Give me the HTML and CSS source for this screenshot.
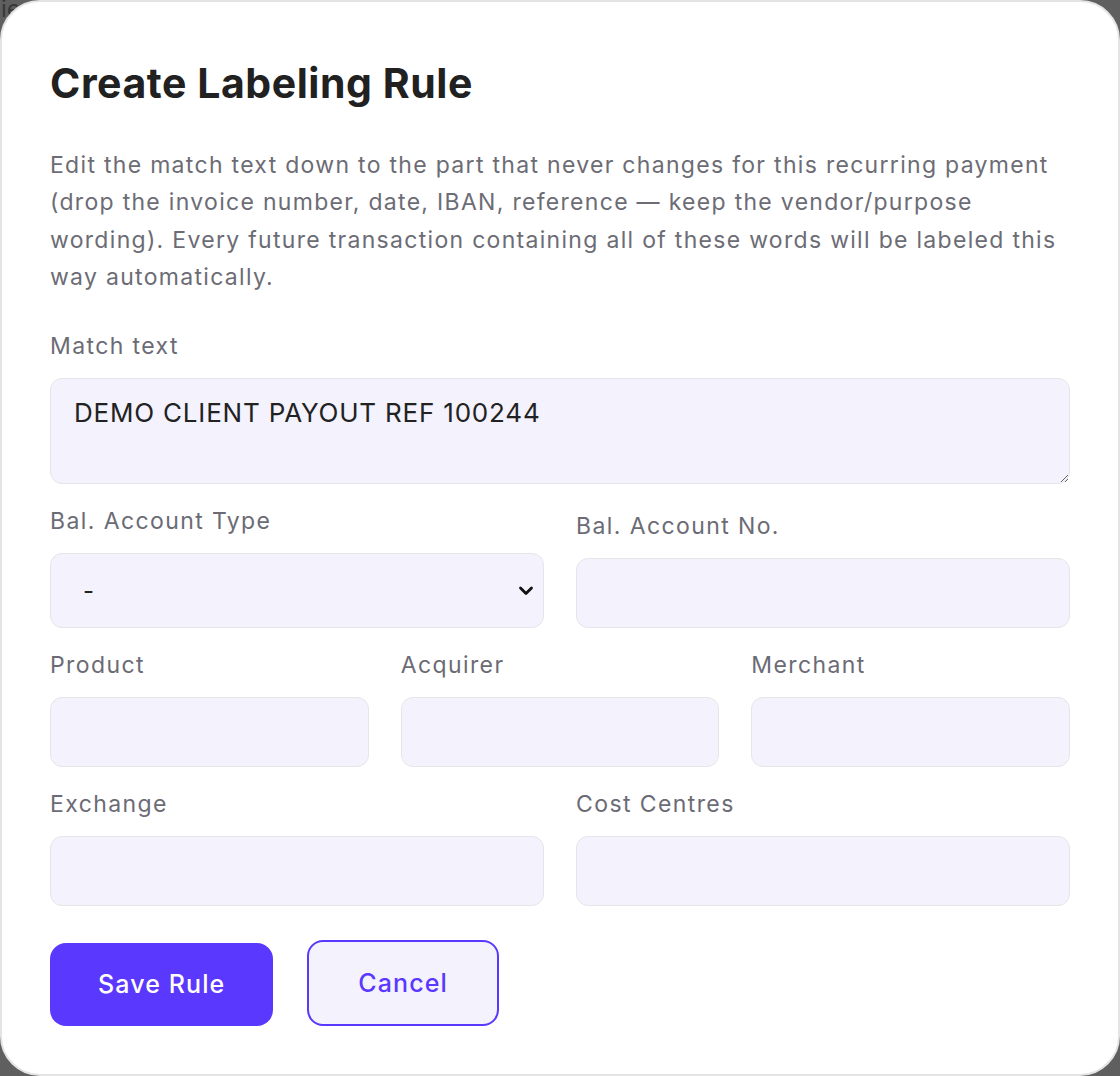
FILE: index.html
```html
<!DOCTYPE html>
<html lang="en">
<head>
<meta charset="utf-8">
<title>Create Labeling Rule</title>
<link rel="stylesheet" href="styles.css">
</head>
<body>
<div class="page-behind">ie</div>
<div class="modal" role="dialog" aria-labelledby="title">
  <h1 class="title" id="title">Create Labeling Rule</h1>
  <p class="desc">Edit the match text down to the part that never changes for this recurring payment (drop the invoice number, date, IBAN, reference — keep the vendor/purpose wording). Every future transaction containing all of these words will be labeled this way automatically.</p>

  <div class="form">
    <div class="field">
      <label class="label" for="match">Match text</label>
      <textarea class="control textarea" id="match">DEMO CLIENT PAYOUT REF 100244</textarea>
    </div>

    <div class="row row-2">
      <div class="field">
        <label class="label" for="baltype">Bal. Account Type</label>
        <div class="select-wrap">
          <select class="control select" id="baltype">
            <option>-</option>
          </select>
          <svg class="chev" width="16" height="16" viewBox="0 0 16 16" aria-hidden="true"><path d="M2.5 5 8 10.5 13.5 5" fill="none" stroke="#111" stroke-width="2.8" stroke-linecap="round" stroke-linejoin="round"/></svg>
        </div>
      </div>
      <div class="field">
        <label class="label" for="balno">Bal. Account No.</label>
        <input class="control input" id="balno" type="text">
      </div>
    </div>

    <div class="row row-3">
      <div class="field">
        <label class="label" for="product">Product</label>
        <input class="control input" id="product" type="text">
      </div>
      <div class="field">
        <label class="label" for="acquirer">Acquirer</label>
        <input class="control input" id="acquirer" type="text">
      </div>
      <div class="field">
        <label class="label" for="merchant">Merchant</label>
        <input class="control input" id="merchant" type="text">
      </div>
    </div>

    <div class="row row-2">
      <div class="field">
        <label class="label" for="exchange">Exchange</label>
        <input class="control input" id="exchange" type="text">
      </div>
      <div class="field">
        <label class="label" for="cost">Cost Centres</label>
        <input class="control input" id="cost" type="text">
      </div>
    </div>

    <div class="actions">
      <button class="btn btn-primary" type="button">Save Rule</button>
      <button class="btn btn-secondary" type="button">Cancel</button>
    </div>
  </div>
</div>
</body>
</html>
```

FILE: styles.css
```css
* {
  box-sizing: border-box;
}

html, body {
  margin: 0;
  padding: 0;
}

body {
  width: 1120px;
  height: 1076px;
  background: #5f5f5f;
  font-family: Inter, "Liberation Sans", sans-serif;
  position: relative;
  overflow: hidden;
}

.page-behind {
  position: absolute;
  top: -5px;
  left: 1px;
  font-size: 24px;
  line-height: 28px;
  color: #383838;
  z-index: 0;
}

.modal {
  position: relative;
  z-index: 1;
  width: 1120px;
  height: 1076px;
  background: #ffffff;
  border: 2px solid #e4e4e4;
  border-radius: 40px;
  padding: 56px 48px 48px;
}

.title {
  margin: 0;
  font-size: 41px;
  line-height: 50px;
  font-weight: 700;
  letter-spacing: 0.55px;
  color: #212121;
}

.desc {
  margin: 39px 0 0;
  font-size: 23px;
  line-height: 37.4px;
  color: #6c6c75;
  letter-spacing: 1.3px;
}

.form {
  margin-top: 33px;
  display: flex;
  flex-direction: column;
  gap: 21px;
}

.field {
  display: flex;
  flex-direction: column;
}

.label {
  font-size: 23px;
  line-height: 32px;
  color: #6b6b75;
  letter-spacing: 1.4px;
  margin-bottom: 16px;
}

.control {
  display: block;
  width: 100%;
  background: #f3f2fd;
  border: 1.5px solid #e6e6ea;
  border-radius: 12px;
  font-family: Inter, "Liberation Sans", sans-serif;
  font-size: 26px;
  color: #222222;
  outline: none;
  margin: 0;
}

.textarea {
  height: 106px;
  padding: 18px 23px;
  resize: vertical;
  line-height: 32px;
  letter-spacing: 0.8px;
}

.input {
  height: 70px;
  padding: 0 23px;
}

.row {
  display: grid;
  gap: 32px;
  align-items: end;
}

.row-2 {
  grid-template-columns: 1fr 1fr;
}

.row-3 {
  grid-template-columns: 1fr 1fr 1fr;
}

.select-wrap {
  position: relative;
}

.select {
  height: 75px;
  padding: 0 50px 0 32px;
  font-size: 24px;
  appearance: none;
  -webkit-appearance: none;
}

.chev {
  position: absolute;
  right: 10px;
  top: 30px;
  pointer-events: none;
}

.actions {
  display: flex;
  align-items: flex-end;
  gap: 34px;
  margin-top: 13px;
}

.btn {
  font-family: Inter, "Liberation Sans", sans-serif;
  font-size: 25px;
  font-weight: 500;
  letter-spacing: 1.1px;
  border-radius: 16px;
  cursor: pointer;
  margin: 0;
}

.btn-primary {
  height: 83px;
  padding: 0 48px;
  background: #5a38fd;
  color: #ffffff;
  border: none;
}

.btn-secondary {
  height: 86px;
  padding: 0 49px;
  background: #f3f2fd;
  color: #5a38fd;
  border: 2px solid #5a38fd;
}
```
